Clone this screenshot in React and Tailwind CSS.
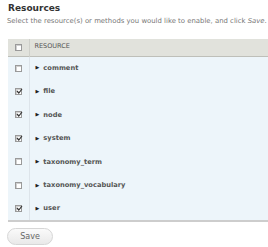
import { useState } from 'react';

const recursos = [
  { nombre: 'comment', activo: false },
  { nombre: 'file', activo: true },
  { nombre: 'node', activo: true },
  { nombre: 'system', activo: true },
  { nombre: 'taxonomy_term', activo: false },
  { nombre: 'taxonomy_vocabulary', activo: false },
  { nombre: 'user', activo: true },
];

function Casilla({ checked }) {
  return (
    <span className="relative block h-[7px] w-[7px] border border-[#9a9a9a] bg-white shadow-[inset_1px_1px_0_#d0d0d0]">
      {checked && (
        <svg
          className="absolute left-[0px] top-[-1px]"
          width="7"
          height="7"
          viewBox="0 0 7 7"
        >
          <path d="M1 3 L2.8 5 L6 1" stroke="#333" strokeWidth="1.2" fill="none" />
        </svg>
      )}
    </span>
  );
}

export default function App() {
  const [filas] = useState(recursos);

  return (
    <section className="h-[247px] w-[268px] bg-white pt-[2px] font-['DejaVu_Sans',sans-serif] text-[#494949]">
      <div className="pl-[8px] text-[9px] font-bold leading-[12px] text-[#333]">
        Resources
      </div>
      <div className="mt-[3px] pl-[7px] text-[6.9px] leading-[9px] text-[#777]">
        Select the resource(s) or methods you would like to enable, and click{' '}
        <em>Save</em>.
      </div>
      <table className="ml-[8px] mt-[13px] w-[260px] border-collapse">
        <thead>
          <tr className="h-[17px] border-b border-[#bebfb9] bg-[#e1e2dc]">
            <th className="w-[21px] border-r border-[#cfd0ca] p-0">
              <div className="flex justify-center">
                <Casilla checked={false} />
              </div>
            </th>
            <th className="pl-[5px] text-left text-[6.5px] font-normal uppercase text-[#555]">
              Resource
            </th>
          </tr>
        </thead>
        <tbody className="bg-[#edf5fa]">
          {filas.map((r, i) => (
            <tr
              key={i}
              className={
                i === filas.length - 1
                  ? 'h-[23.5px] border-b-2 border-[#cdcdcd]'
                  : 'h-[23.5px]'
              }
            >
              <td className="border-r border-[#dde4ea] p-0">
                <div className="flex justify-center">
                  <Casilla checked={r.activo} />
                </div>
              </td>
              <td className="pl-[6px] text-[6.7px] font-bold text-[#555]">
                <span className="mr-[4px] inline-block align-middle text-[5px] text-[#222]">
                  ▶
                </span>
                {r.nombre}
              </td>
            </tr>
          ))}
        </tbody>
      </table>
      <button className="ml-[7px] mt-[6px] h-[17px] w-[46px] rounded-full border border-[#d6d6d6] bg-gradient-to-b from-[#fafafa] to-[#e9e9e9] text-[8px] text-[#666]">
        Save
      </button>
    </section>
  );
}
